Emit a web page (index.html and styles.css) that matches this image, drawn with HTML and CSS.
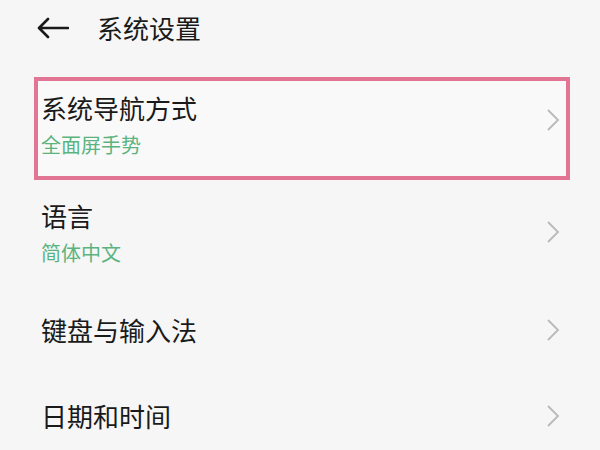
FILE: index.html
```html
<!DOCTYPE html>
<html lang="zh-CN">
  <head>
    <meta charset="UTF-8" />
    <meta name="viewport" content="width=device-width, initial-scale=1.0" />
    <link rel="stylesheet" href="styles.css">
  </head>
  <body>
    <div class="header">
      <svg class="back" width="32" height="22" viewBox="0 0 32 22">
        <path d="M31 11 H3 M11 2 L2 11 L11 20" fill="none" stroke="#1a1a1a" stroke-width="2.6" stroke-linecap="round" stroke-linejoin="round" />
      </svg>
      <span class="title">系统设置</span>
    </div>

    <div class="list">
      <div class="item active">
        <div class="text">
          <div class="name">系统导航方式</div>
          <div class="value">全面屏手势</div>
        </div>
        <svg class="chev" width="14" height="24" viewBox="0 0 14 24">
          <path d="M2 2 L12 12 L2 22" fill="none" stroke="#b9b9b9" stroke-width="1.8" />
        </svg>
      </div>
      <div class="item two">
        <div class="text">
          <div class="name">语言</div>
          <div class="value">简体中文</div>
        </div>
        <svg class="chev" width="14" height="24" viewBox="0 0 14 24">
          <path d="M2 2 L12 12 L2 22" fill="none" stroke="#b9b9b9" stroke-width="1.8" />
        </svg>
      </div>
      <div class="item single">
        <div class="text">
          <div class="name">键盘与输入法</div>
        </div>
        <svg class="chev" width="14" height="24" viewBox="0 0 14 24">
          <path d="M2 2 L12 12 L2 22" fill="none" stroke="#b9b9b9" stroke-width="1.8" />
        </svg>
      </div>
      <div class="item single">
        <div class="text">
          <div class="name">日期和时间</div>
        </div>
        <svg class="chev" width="14" height="24" viewBox="0 0 14 24">
          <path d="M2 2 L12 12 L2 22" fill="none" stroke="#b9b9b9" stroke-width="1.8" />
        </svg>
      </div>
    </div>
  </body>
</html>
```

FILE: styles.css
```css
body {
  margin: 0;
  background-color: #f6f6f6;
  font-family: "Noto Sans CJK SC", "Noto Sans", sans-serif;
  color: #1a1a1a;
  overflow: hidden;
}
.header {
  display: flex;
  align-items: center;
  height: 56px;
  padding-left: 37px;
  margin-bottom: 21px;
}
.back {
  margin-right: 28px;
}
.title {
  font-size: 26px;
  line-height: 32px;
}
.list {
  margin-left: 34px;
  width: 536px;
}
.item {
  display: flex;
  align-items: center;
  justify-content: space-between;
  padding: 20px 10px 22px 7px;
}
.item.active {
  padding-top: 15px;
  padding-bottom: 24px;
  background-color: #f9f9f9;
  outline: 4px solid #e27594;
  outline-offset: -4px;
}
.item.single {
  padding-top: 28px;
  padding-bottom: 26px;
}
.name {
  font-size: 26px;
  line-height: 32px;
}
.value {
  margin-top: 10px;
  font-size: 20px;
  line-height: 22px;
  color: #5bb47f;
}
.chev {
  margin-top: -8px;
}
.item.two .chev,
.item.single .chev {
  margin-top: 0;
}
```
